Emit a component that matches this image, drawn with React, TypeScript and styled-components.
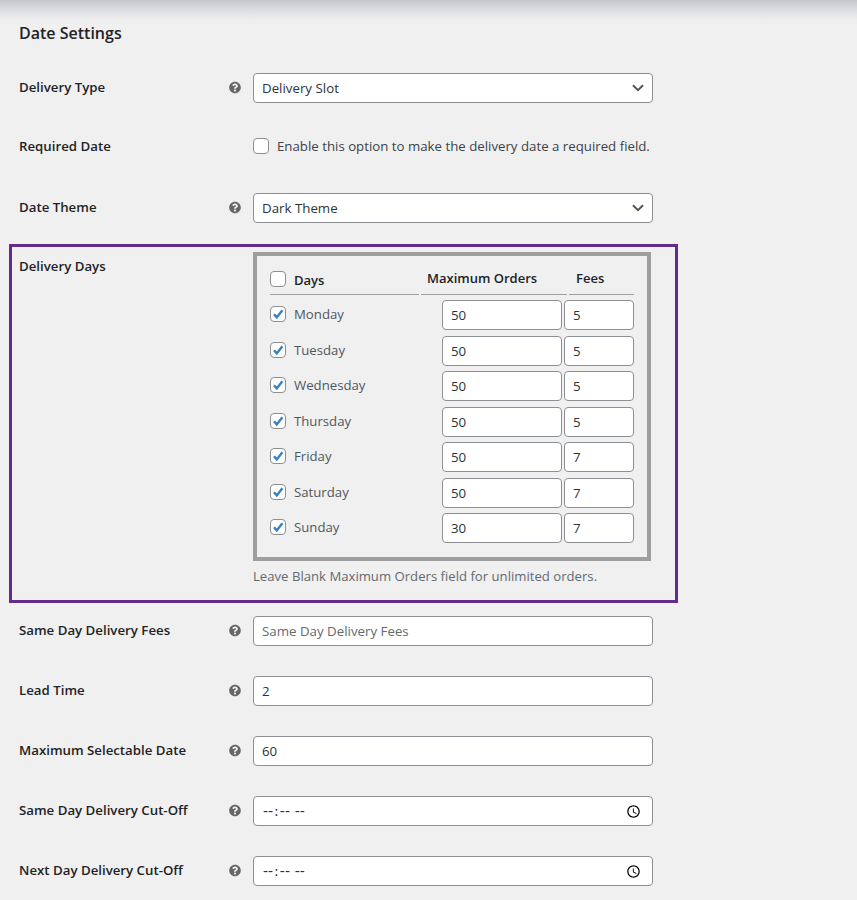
import React from "react";
import styled, { createGlobalStyle } from "styled-components";
import { FaQuestionCircle } from "react-icons/fa";

const FONT = `"Open Sans", "Noto Sans", "Liberation Sans", sans-serif`;

const Global = createGlobalStyle`
  html, body { margin: 0; padding: 0; background: #f0f0f0; }
  body { font-family: ${FONT}; font-size: 13px; color: #3c434a; }
  * { box-sizing: border-box; }
`;

const Page = styled.div`
  width: 857px;
  height: 900px;
  overflow: hidden;
  background: #f0f0f0;
`;

const TopShade = styled.div`
  height: 24px;
  background: linear-gradient(to bottom, #c5c6ca 0, #d6d7d9 7px, #e6e6e8 14px, #eeeeef 20px, #f0f0f0 26px);
`;

const Content = styled.div`
  padding-left: 19px;
`;

const Heading = styled.h2`
  margin: 0 0 30px;
  height: 19px;
  line-height: 19px;
  font-size: 16px;
  font-weight: 600;
  color: #1d2327;
`;

const Row = styled.div`
  display: grid;
  grid-template-columns: 210px 12px 400px;
  align-items: center;
  height: 30px;
  margin-bottom: 30px;
`;

const Label = styled.div<{ $up?: number }>`
  font-size: 13.25px;
  font-weight: 600;
  color: #1d2327;
  margin-top: ${(p) => -(p.$up ?? 2)}px;
`;

const Help = styled.span`
  display: flex;
  color: #666;
  margin-top: -1px;
`;

const FieldCell = styled.div`
  margin-left: 12px;
  width: 400px;
`;

const baseField = `
  display: block;
  width: 100%;
  height: 30px;
  padding: 0 8px;
  border: 1px solid #8c8f94;
  border-radius: 4px;
  background-color: #fff;
  font-family: ${FONT};
  font-size: 13.3px;
  color: #2c3338;
  outline: none;
`;

const Select = styled.select`
  ${baseField}
  appearance: none;
  background-image: url("data:image/svg+xml,%3Csvg xmlns='http://www.w3.org/2000/svg' width='12' height='8' viewBox='0 0 12 8'%3E%3Cpath d='M1 1.2 6 6.2l5-5' fill='none' stroke='%23555' stroke-width='2'/%3E%3C/svg%3E");
  background-repeat: no-repeat;
  background-position: right 8px center;
`;

const TextInput = styled.input`
  ${baseField}
  &::placeholder { color: #646970; opacity: 1; }
`;

const TimeInput = styled(TextInput).attrs({ type: "time" })`
  font-family: "DejaVu Sans", sans-serif;
  font-size: 14px;
  &::-webkit-calendar-picker-indicator {
    width: 15px;
    height: 15px;
    margin-right: 3px;
    padding: 0;
  }
`;

const Check = styled.input.attrs({ type: "checkbox" })`
  appearance: none;
  flex: none;
  width: 16px;
  height: 16px;
  margin: 0;
  border: 1px solid #8c8f94;
  border-radius: 4px;
  background: #fff center / 14px 14px no-repeat;
  &:checked {
    background-image: url("data:image/svg+xml,%3Csvg xmlns='http://www.w3.org/2000/svg' viewBox='0 0 14 14'%3E%3Cpath d='M3 7.2 5.8 10.4 11.4 3.2' fill='none' stroke='%233582c4' stroke-width='2.4'/%3E%3C/svg%3E");
  }
`;

const CheckLine = styled.label`
  display: flex;
  align-items: center;
  gap: 8px;
  margin-top: -4px;
  font-size: 13.25px;
  color: #3c434a;
`;

const Highlight = styled.div`
  display: grid;
  grid-template-columns: 234px 400px;
  width: 669px;
  height: 359px;
  margin: -9px 0 13px -10px;
  padding: 5px 0 0 7px;
  border: 3px solid #642b8f;
`;

const DaysBox = styled.div`
  width: 398px;
  height: 309px;
  padding: 15px 13px 0;
  border: 4px solid #9e9e9e;
`;

const HeadRow = styled.div`
  display: grid;
  grid-template-columns: 149px 146px 65px;
  column-gap: 2px;
  height: 24px;
`;

const HeadCell = styled.div<{ $pad: number }>`
  display: flex;
  align-items: flex-start;
  height: 24px;
  padding-left: ${(p) => p.$pad}px;
  font-size: 13px;
  font-weight: 600;
  line-height: 14px;
  color: #1d2327;
  border-bottom: 1px solid #9e9e9e;
`;

const DaysHead = styled(HeadCell)`
  gap: 8px;
  line-height: 19px;
`;

const DayRows = styled.div`
  display: flex;
  flex-direction: column;
  gap: 5.5px;
  margin-top: 5.4px;
`;

const DayRow = styled.div`
  display: flex;
  align-items: center;
  gap: 2px;
  height: 30px;
`;

const DayName = styled.label`
  flex: 1;
  display: flex;
  align-items: center;
  gap: 8px;
  margin-top: -2px;
  font-size: 13.2px;
  color: #50575e;
`;

const CellInput = styled(TextInput)<{ $w: number }>`
  width: ${(p) => p.$w}px;
  flex: none;
`;

const Hint = styled.p`
  margin: 6px 0 0;
  font-size: 13.15px;
  color: #646970;
`;

const days = [
  ["Monday", "50", "5"],
  ["Tuesday", "50", "5"],
  ["Wednesday", "50", "5"],
  ["Thursday", "50", "5"],
  ["Friday", "50", "7"],
  ["Saturday", "50", "7"],
  ["Sunday", "30", "7"],
];

const HelpTip = () => (
  <Help>
    <FaQuestionCircle size={13} />
  </Help>
);

const Field = ({ label, children }: { label: string; children: React.ReactNode }) => (
  <Row>
    <Label>{label}</Label>
    <HelpTip />
    <FieldCell>{children}</FieldCell>
  </Row>
);

export default function App() {
  return (
    <Page>
      <Global />
      <TopShade />
      <Content>
        <Heading>Date Settings</Heading>
        <Field label="Delivery Type">
          <Select defaultValue="slot">
            <option value="slot">Delivery Slot</option>
          </Select>
        </Field>
        <Row>
          <Label $up={4}>Required Date</Label>
          <span />
          <FieldCell>
            <CheckLine>
              <Check />
              Enable this option to make the delivery date a required field.
            </CheckLine>
          </FieldCell>
        </Row>
        <Field label="Date Theme">
          <Select defaultValue="dark">
            <option value="dark">Dark Theme</option>
          </Select>
        </Field>
        <Highlight>
          <Label $up={-5}>Delivery Days</Label>
          <div>
            <DaysBox>
              <HeadRow>
                <DaysHead $pad={0}>
                  <Check />
                  <span>Days</span>
                </DaysHead>
                <HeadCell $pad={6}>
                  <span>Maximum Orders</span>
                </HeadCell>
                <HeadCell $pad={7}>
                  <span>Fees</span>
                </HeadCell>
              </HeadRow>
              <DayRows>
                {days.map(([name, max, fee]) => (
                  <DayRow key={name}>
                    <DayName>
                      <Check defaultChecked />
                      {name}
                    </DayName>
                    <CellInput $w={120} defaultValue={max} />
                    <CellInput $w={70} defaultValue={fee} />
                  </DayRow>
                ))}
              </DayRows>
            </DaysBox>
            <Hint>Leave Blank Maximum Orders field for unlimited orders.</Hint>
          </div>
        </Highlight>
        <Field label="Same Day Delivery Fees">
          <TextInput placeholder="Same Day Delivery Fees" />
        </Field>
        <Field label="Lead Time">
          <TextInput defaultValue="2" />
        </Field>
        <Field label="Maximum Selectable Date">
          <TextInput defaultValue="60" />
        </Field>
        <Field label="Same Day Delivery Cut-Off">
          <TimeInput />
        </Field>
        <Field label="Next Day Delivery Cut-Off">
          <TimeInput />
        </Field>
      </Content>
    </Page>
  );
}
